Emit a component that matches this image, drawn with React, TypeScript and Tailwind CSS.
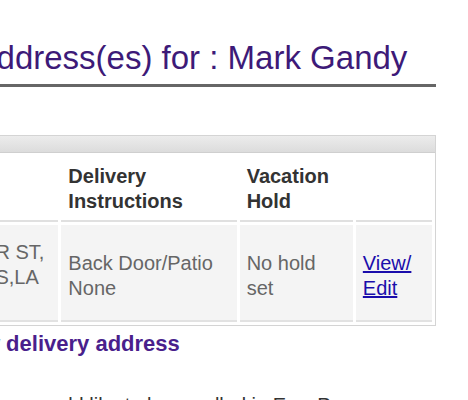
import React from "react";

export default function App() {
  return (
    <div className="w-[468px] h-[400px] overflow-hidden bg-white" style={{ fontFamily: '"Liberation Sans", Arial, sans-serif' }}>
      <div className="ml-[-160px] w-[596px]">
        <h1 className="mt-[39px] pl-[8px] pb-[7px] text-[33px] leading-[38px] font-normal text-[#3d1a78] border-b-[3px] border-[#666666] whitespace-nowrap">
          Delivery Address(es) for : Mark Gandy
        </h1>

        <div className="mt-[48px] ml-[10px] w-[586px] border border-[#d4d4d4]">
          <div className="h-[17px] bg-gradient-to-b from-[#ececec] to-[#dcdcdc] border-b border-[#cfcfcf]" />
          <table className="w-full border-separate border-spacing-[3px] mt-[-3px] table-fixed">
            <colgroup>
              <col className="w-[204px]" />
              <col className="w-[175px]" />
              <col className="w-[113px]" />
              <col className="w-[76px]" />
            </colgroup>
            <thead>
              <tr className="text-left text-[20px] leading-[25px] font-bold text-[#333333]">
                <th className="pl-[7px] pt-[11px] pb-[6px] border-b-2 border-[#e0e0e0] font-bold align-top">Address</th>
                <th className="pl-[7px] pt-[11px] pb-[6px] border-b-2 border-[#e0e0e0] font-bold align-top">Delivery<br />Instructions</th>
                <th className="pl-[7px] pt-[11px] pb-[6px] border-b-2 border-[#e0e0e0] font-bold align-top">Vacation<br />Hold</th>
                <th className="pl-[7px] pt-[11px] pb-[6px] border-b-2 border-[#e0e0e0] font-bold align-top"></th>
              </tr>
            </thead>
            <tbody>
              <tr className="text-[20px] leading-[25px] text-[#666666]">
                <td className="h-[97px] pl-[7px] pt-[15px] bg-[#f4f4f4] border-b-2 border-[#e2e2e2] align-top whitespace-nowrap">1234 WEBSTER ST,<br />NEW ORLEANS,LA</td>
                <td className="h-[97px] pl-[7px] pt-[26px] bg-[#f4f4f4] border-b-2 border-[#e2e2e2] align-top">Back Door/Patio<br />None</td>
                <td className="h-[97px] pl-[7px] pt-[26px] bg-[#f4f4f4] border-b-2 border-[#e2e2e2] align-top">No hold<br />set</td>
                <td className="h-[97px] pl-[7px] pt-[26px] bg-[#f4f4f4] border-b-2 border-[#e2e2e2] align-top">
                  <a href="#" className="text-[#1a0dab] underline">View/<br />Edit</a>
                </td>
              </tr>
            </tbody>
          </table>
        </div>

        <div className="mt-[5px] pl-[50px] text-[22px] leading-[25px] font-bold text-[#4a1f8c] whitespace-nowrap">
          Add a new delivery address
        </div>

        <p className="mt-[37px] pl-[137px] text-[20px] leading-[25px] text-[#333333] whitespace-nowrap">
          If you would like to be enrolled in EasyPay
        </p>
      </div>
    </div>
  );
}
